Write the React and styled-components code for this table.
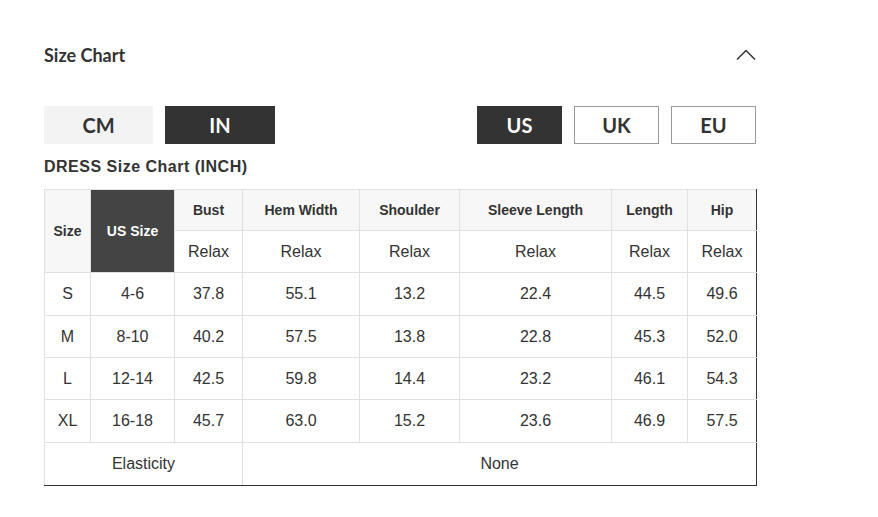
import styled, { createGlobalStyle } from 'styled-components'

const GlobalStyle = createGlobalStyle`
  body {
    margin: 0;
    background: #fff;
    color: #333;
    font-family: "Liberation Sans", Arial, sans-serif;
  }
`

const Page = styled.div`
  width: 712px;
  padding: 30px 0 0 44px;
`

const Head = styled.div`
  display: flex;
  align-items: center;
  justify-content: space-between;
  height: 50px;
`

const Title = styled.h2`
  margin: 0;
  font-family: Lato, "Open Sans", sans-serif;
  font-size: 18px;
  font-weight: 700;
  color: #333;
`

const Toggle = styled.svg`
  width: 20px;
  height: 12px;
`

const Switches = styled.div`
  display: flex;
  justify-content: space-between;
  margin-top: 26px;
`

const Group = styled.div`
  display: flex;
  gap: ${p => p.$gap}px;
`

const Tab = styled.button`
  width: ${p => p.$w}px;
  height: 38px;
  padding: 0;
  box-sizing: border-box;
  font-family: Lato, "Open Sans", sans-serif;
  font-size: 20px;
  font-weight: 700;
  cursor: pointer;
  color: ${p => (p.$active ? '#fff' : '#333')};
  background: ${p => (p.$active ? '#333' : p.$soft ? '#f3f3f3' : '#fff')};
  border: ${p => (p.$soft || p.$active ? 'none' : '1px solid #999')};
`

const Caption = styled.h3`
  margin: 14px 0 13px;
  font-size: 16px;
  font-weight: 700;
  letter-spacing: 0.5px;
  color: #333;
  line-height: 18px;
`

const Table = styled.table`
  width: 712px;
  table-layout: fixed;
  border-collapse: collapse;
  text-align: center;
`

const Cell = styled.td`
  border: 1px solid #e0e0e0;
  border-bottom-color: ${p => (p.$last ? '#333' : '#e0e0e0')};
  height: ${p => p.$h || 41}px;
  padding: 0;
  font-size: 16px;
  color: #333;
  &:last-child {
    border-right-color: #333;
  }
`

const HeadCell = styled(Cell).attrs({ as: 'th' })`
  background: ${p => (p.$dark ? '#444' : '#f7f7f7')};
  color: ${p => (p.$dark ? '#fff' : '#333')};
  font-size: 14px;
  font-weight: 700;
  padding-bottom: 1px;
`

const widths = [46, 84, 68, 117, 100, 152, 76, 69]
const measures = ['Bust', 'Hem Width', 'Shoulder', 'Sleeve Length', 'Length', 'Hip']
const rows = [
  ['S', '4-6', '37.8', '55.1', '13.2', '22.4', '44.5', '49.6'],
  ['M', '8-10', '40.2', '57.5', '13.8', '22.8', '45.3', '52.0'],
  ['L', '12-14', '42.5', '59.8', '14.4', '23.2', '46.1', '54.3'],
  ['XL', '16-18', '45.7', '63.0', '15.2', '23.6', '46.9', '57.5'],
]
const heights = [42, 41, 41, 42]

const App = () => {
  return (
    <>
      <GlobalStyle />
      <Page>
        <Head>
          <Title>Size Chart</Title>
          <Toggle viewBox="0 0 20 12">
            <path d="M1 10.5 L10 1.5 L19 10.5" fill="none" stroke="#333" strokeWidth="1.5" />
          </Toggle>
        </Head>
        <Switches>
          <Group $gap={12}>
            <Tab $w={109} $soft>CM</Tab>
            <Tab $w={110} $active>IN</Tab>
          </Group>
          <Group $gap={12}>
            <Tab $w={85} $active>US</Tab>
            <Tab $w={85}>UK</Tab>
            <Tab $w={85}>EU</Tab>
          </Group>
        </Switches>
        <Caption>DRESS Size Chart (INCH)</Caption>
        <Table>
          <colgroup>
            {widths.map((w, i) => (
              <col key={i} style={{ width: w }} />
            ))}
          </colgroup>
          <thead>
            <tr>
              <HeadCell rowSpan={2}>Size</HeadCell>
              <HeadCell rowSpan={2} $dark>US Size</HeadCell>
              {measures.map(m => (
                <HeadCell key={m} $h={39}>{m}</HeadCell>
              ))}
            </tr>
            <tr>
              {measures.map(m => (
                <Cell key={m} $h={41}>Relax</Cell>
              ))}
            </tr>
          </thead>
          <tbody>
            {rows.map((r, i) => (
              <tr key={r[0]}>
                {r.map((v, j) => (
                  <Cell key={j} $h={heights[i]}>{v}</Cell>
                ))}
              </tr>
            ))}
            <tr>
              <Cell colSpan={3} $h={42} $last>Elasticity</Cell>
              <Cell colSpan={5} $h={42} $last>None</Cell>
            </tr>
          </tbody>
        </Table>
      </Page>
    </>
  )
}

export default App
